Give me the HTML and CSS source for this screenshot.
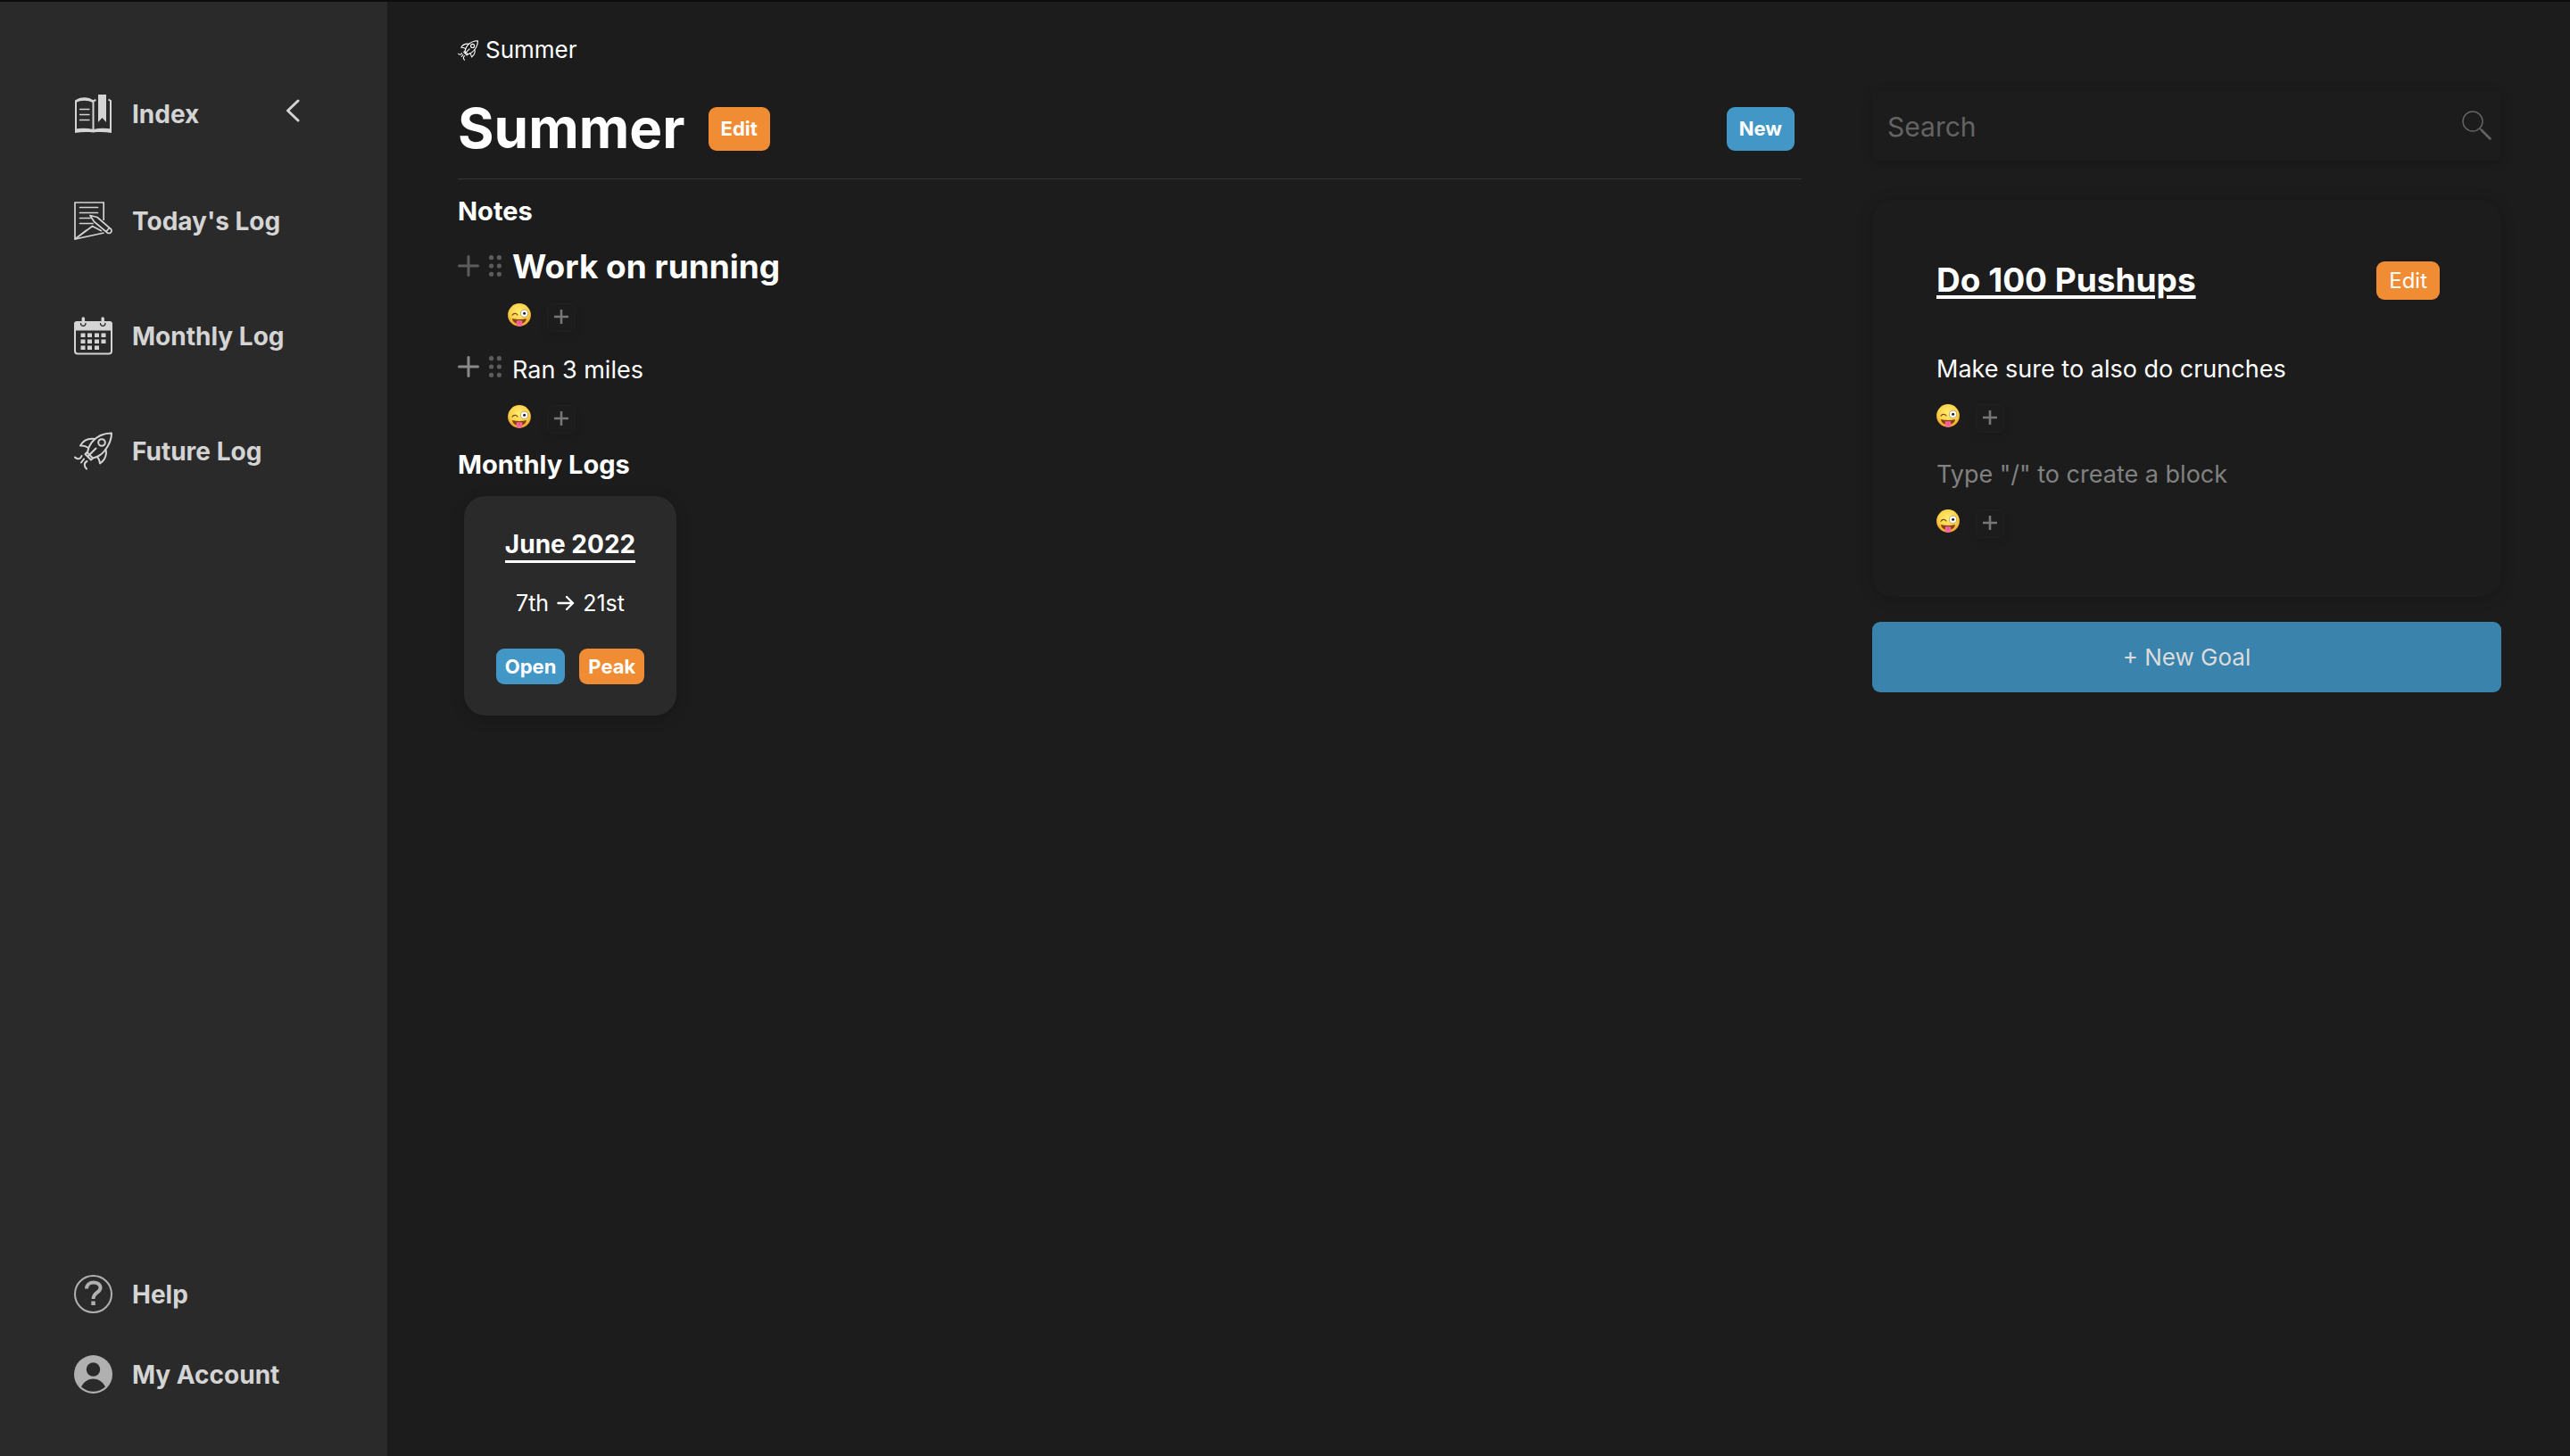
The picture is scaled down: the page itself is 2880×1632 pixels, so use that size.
FILE: index.html
```html
<!DOCTYPE html>
<html lang="en">
<head>
<meta charset="utf-8">
<meta name="viewport" content="width=device-width, initial-scale=1">
<title>Summer</title>
<link rel="stylesheet" href="styles.css">
</head>
<body>
<svg class="sprite" aria-hidden="true">
  <defs>
    <radialGradient id="face" cx="50%" cy="38%" r="62%">
      <stop offset="0" stop-color="#ffee74"/>
      <stop offset=".65" stop-color="#fbd24a"/>
      <stop offset="1" stop-color="#ec9a26"/>
    </radialGradient>
  </defs>
  <symbol id="rocket" viewBox="0 0 43 42">
    <g fill="none" stroke="currentColor" stroke-width="2" stroke-linejoin="round" stroke-linecap="round">
      <path d="M42 1C31 1 25 5 20 11C17 15 15.500 19 15 23L21 29C26 28 30 26 34 21C39 15 42 9 42 1Z"/>
      <circle cx="31" cy="11.500" r="3.800"/>
      <path d="M23.500 7.500C16 6.500 10 9.500 7 15C10 14.500 13 15.500 16.300 17.500"/>
      <path d="M35.500 19.500C37 26 34.500 31 29 35C28.500 31.500 27.500 29 25.500 27.300"/>
      <path d="M24.500 18L16.500 26M14.500 22.500L12.500 24.500L19 31L21 29"/>
      <path d="M1 28C3.500 31 7.500 30 8.500 26.500M11 30L8 34M14.500 32.500C11 34 11 38 14 41"/>
    </g>
  </symbol>
  <symbol id="plus" viewBox="0 0 24 24">
    <path d="M12 1.500V22.500M1.500 12H22.500" stroke="currentColor" stroke-width="3" stroke-linecap="round"/>
  </symbol>
  <symbol id="plus-small" viewBox="0 0 16 16">
    <path d="M8 0V16M0 8H16" stroke="currentColor" stroke-width="2.600"/>
  </symbol>
  <symbol id="grip" viewBox="0 0 14 24">
    <g fill="currentColor">
      <circle cx="2.600" cy="2.700" r="2.600"/><circle cx="11.400" cy="2.700" r="2.600"/>
      <circle cx="2.600" cy="12" r="2.600"/><circle cx="11.400" cy="12" r="2.600"/>
      <circle cx="2.600" cy="21.300" r="2.600"/><circle cx="11.400" cy="21.300" r="2.600"/>
    </g>
  </symbol>
  <symbol id="wink" viewBox="0 0 26 26">
    <circle cx="13" cy="13" r="12.900" fill="url(#face)"/>
    <path d="M5 13.200C6.500 10.800 9.500 10.800 11 13" fill="none" stroke="#7a4513" stroke-width="1.200" stroke-linecap="round"/>
    <circle cx="18.600" cy="11.300" r="4.100" fill="#fff" stroke="#a9875a" stroke-width=".7"/>
    <circle cx="18.600" cy="11.300" r="1.500" fill="#222"/>
    <path d="M5 17C10 18.300 16 18.300 21 17C20.500 21 17 23 13 23C9 23 5.500 21 5 17Z" fill="#87400f"/>
    <path d="M9.800 19.500C12 18.700 14 18.700 16.200 19.500V23C16.200 27 9.800 27 9.800 23Z" fill="#f5659f"/>
    <path d="M13 19.500V23" stroke="#d63d7c" stroke-width=".7"/>
  </symbol>
</svg>

<div class="app">
  <aside class="sidebar">
    <div class="sidebar-top">
      <a class="nav-link" href="#index">
        <svg class="nav-icon" viewBox="0 0 43 43" aria-hidden="true">
          <path d="M2 41V7M41 41V7L38.500 5.500M21.500 7.500V40M21.500 7.500C22.500 6.700 23 6.500 24.500 6" fill="none" stroke="currentColor" stroke-width="2"/>
          <path d="M1 38.500C8 37.500 15 37.500 21.500 39C28 37.500 35 37.500 42 38.500V43C35 41.800 28 41.800 21.500 42.500C15 41.800 8 41.800 1 43Z" fill="currentColor"/>
          <path d="M1 6.500C7 2 16 2 22 6.500L21 9C15 6 8 6 2 9Z" fill="currentColor"/>
          <path d="M6.500 16.500H17M6.500 22.500H17M6.500 28.500H17" stroke="currentColor" stroke-width="1.300" stroke-linecap="round"/>
          <path d="M27 0H36V31L31.500 26L27 31Z" fill="currentColor"/>
        </svg>
        Index
      </a>
      <button class="collapse" type="button" aria-label="Collapse sidebar">
        <svg width="16" height="26" viewBox="0 0 16 26" aria-hidden="true"><path d="M14 2L2.500 13L14 24" fill="none" stroke="currentColor" stroke-width="3" stroke-linecap="round" stroke-linejoin="round"/></svg>
      </button>
    </div>
    <nav class="nav-list">
      <a class="nav-link" href="#today">
        <svg class="nav-icon" viewBox="0 0 43 43" aria-hidden="true">
          <g fill="none" stroke="currentColor" stroke-width="1.700">
            <path d="M33.200 21V1H1V42L33.500 35"/>
            <path d="M1 42L20.500 27.500L31 33M1 42L14 32"/>
            <path d="M6.500 6.500H26.500M6.500 12.500H26.500M6.500 18.500H18M6.500 24.500H21" stroke-linecap="round"/>
            <path d="M18 15.500L26 17.500L41.500 31C43 34 40.500 36.500 37.500 35L22.500 22.500Z" fill="#2a2a2a" stroke-linejoin="round"/>
            <path d="M39.500 29.500L36 33.500"/>
          </g>
        </svg>
        Today's Log
      </a>
      <a class="nav-link" href="#monthly">
        <svg class="nav-icon" viewBox="0 0 43 43" aria-hidden="true">
          <rect x="1" y="6" width="41" height="35.500" rx="3" fill="none" stroke="currentColor" stroke-width="2"/>
          <path d="M0 15.500V8C0 6 1.500 5 3.500 5H39.500C41.500 5 43 6 43 8V15.500Z" fill="currentColor"/>
          <path d="M7.500 7C7.500 11.500 13 11.500 13 7M29.500 7C29.500 11.500 35 11.500 35 7" fill="none" stroke="#2a2a2a" stroke-width="1.300"/>
          <path d="M10.300 2V7M32.200 2V7" stroke="currentColor" stroke-width="3.500" stroke-linecap="round"/>
          <g fill="currentColor">
            <rect x="7.500" y="18.500" width="5" height="4.500"/><rect x="15" y="18.500" width="5" height="4.500"/><rect x="23" y="18.500" width="5" height="4.500"/><rect x="30.500" y="18.500" width="5" height="4.500"/>
            <rect x="7.500" y="25.500" width="5" height="4.500"/><rect x="15" y="25.500" width="5" height="4.500"/><rect x="23" y="25.500" width="5" height="4.500"/><rect x="30.500" y="25.500" width="5" height="4.500"/>
            <rect x="7.500" y="32.500" width="5" height="4.500"/><rect x="15" y="32.500" width="5" height="4.500"/><rect x="23" y="32.500" width="5" height="4.500"/>
          </g>
        </svg>
        Monthly Log
      </a>
      <a class="nav-link" href="#future">
        <svg class="nav-icon" aria-hidden="true"><use href="#rocket"/></svg>
        Future Log
      </a>
    </nav>
    <nav class="nav-footer">
      <a class="nav-link" href="#help">
        <svg class="nav-icon muted" viewBox="0 0 43 43" aria-hidden="true">
          <circle cx="21.500" cy="21.500" r="20.500" fill="none" stroke="currentColor" stroke-width="2"/>
          <path d="M14 15.500C14 6 29.500 6.500 29.500 14.500C29.500 20 21.500 19.500 21.500 27" fill="none" stroke="currentColor" stroke-width="4"/>
          <rect x="19.300" y="29.500" width="4.500" height="4.500" fill="currentColor"/>
        </svg>
        Help
      </a>
      <a class="nav-link" href="#account">
        <svg class="nav-icon muted" viewBox="0 0 43 43" aria-hidden="true">
          <circle cx="21.500" cy="21.500" r="21.500" fill="currentColor"/>
          <circle cx="21.500" cy="16" r="7.700" fill="#2a2a2a"/>
          <path d="M8 35.500C14 23.500 29 23.500 35 35.500C27 42.500 16 42.500 8 35.500Z" fill="#2a2a2a"/>
        </svg>
        My Account
      </a>
    </nav>
  </aside>

  <main class="page">
    <a class="crumb" href="#summer"><svg class="crumb-icon" aria-hidden="true"><use href="#rocket"/></svg>Summer</a>
    <header class="page-header">
      <h1>Summer</h1>
      <button class="btn orange tall" type="button">Edit</button>
      <button class="btn blue tall push" type="button">New</button>
    </header>

    <h2>Notes</h2>
    <section class="blocks">
      <article class="block">
        <div class="block-line">
          <div class="tools tools-heading">
            <button class="tool dim" type="button" aria-label="Add block"><svg width="24" height="24"><use href="#plus"/></svg></button>
            <button class="tool dim" type="button" aria-label="Move block"><svg width="14" height="24"><use href="#grip"/></svg></button>
          </div>
          <h3>Work on running</h3>
        </div>
        <div class="reactions indented">
          <button class="emoji" type="button" aria-label="Winking face"><svg width="26" height="26"><use href="#wink"/></svg></button>
          <button class="add" type="button" aria-label="Add reaction"><svg width="16" height="16"><use href="#plus-small"/></svg></button>
        </div>
      </article>
      <article class="block">
        <div class="block-line">
          <div class="tools">
            <button class="tool" type="button" aria-label="Add block"><svg width="24" height="24"><use href="#plus"/></svg></button>
            <button class="tool dim" type="button" aria-label="Move block"><svg width="14" height="24"><use href="#grip"/></svg></button>
          </div>
          <p>Ran 3 miles</p>
        </div>
        <div class="reactions indented">
          <button class="emoji" type="button" aria-label="Winking face"><svg width="26" height="26"><use href="#wink"/></svg></button>
          <button class="add" type="button" aria-label="Add reaction"><svg width="16" height="16"><use href="#plus-small"/></svg></button>
        </div>
      </article>
    </section>

    <h2>Monthly Logs</h2>
    <section class="cards">
      <article class="month-card">
        <a class="month-name" href="#june-2022">June 2022</a>
        <p class="range">7th <svg width="20" height="18" viewBox="0 0 20 18" role="img" aria-label="to"><path d="M1.500 9H18M11 2L18 9L11 16" fill="none" stroke="currentColor" stroke-width="2.400" stroke-linecap="round" stroke-linejoin="round"/></svg> 21st</p>
        <div class="card-actions">
          <button class="btn blue" type="button">Open</button>
          <button class="btn orange" type="button">Peak</button>
        </div>
      </article>
    </section>
  </main>

  <aside class="goals">
    <form class="search" role="search">
      <input type="search" placeholder="Search" aria-label="Search">
      <button class="search-btn" type="button" aria-label="Run search">
        <svg width="34" height="34" viewBox="0 0 34 34" aria-hidden="true"><circle cx="12" cy="12" r="11" fill="none" stroke="currentColor" stroke-width="1.500"/><path d="M20 20L23 23" stroke="currentColor" stroke-width="1.500"/><path d="M22 22L31.500 31.500" stroke="currentColor" stroke-width="2.600" stroke-linecap="round"/></svg>
      </button>
    </form>
    <section class="goal-card">
      <header class="goal-header">
        <a class="goal-title" href="#pushups">Do 100 Pushups</a>
        <button class="btn orange plain" type="button">Edit</button>
      </header>
      <div class="goal-block">
        <p>Make sure to also do crunches</p>
        <div class="reactions">
          <button class="emoji" type="button" aria-label="Winking face"><svg width="26" height="26"><use href="#wink"/></svg></button>
          <button class="add" type="button" aria-label="Add reaction"><svg width="16" height="16"><use href="#plus-small"/></svg></button>
        </div>
      </div>
      <div class="goal-block">
        <input class="block-input" type="text" placeholder='Type "/" to create a block' aria-label="New block">
        <div class="reactions">
          <button class="emoji" type="button" aria-label="Winking face"><svg width="26" height="26"><use href="#wink"/></svg></button>
          <button class="add" type="button" aria-label="Add reaction"><svg width="16" height="16"><use href="#plus-small"/></svg></button>
        </div>
      </div>
    </section>
    <button class="new-goal" type="button">+ New Goal</button>
  </aside>
</div>
</body>
</html>
```
FILE: styles.css
```css
* { box-sizing: border-box; }

body {
  margin: 0;
  background: #1c1c1c;
  color: #fff;
  font: 27px/40px Inter, "Liberation Sans", sans-serif;
}

h1, h2, h3, p { margin: 0; }
a { color: inherit; text-decoration: none; }
button, input { font: inherit; color: inherit; border: 0; padding: 0; margin: 0; background: none; }
button { cursor: pointer; }
svg { display: block; flex: none; }
.sprite { position: absolute; width: 0; height: 0; }

.app {
  display: grid;
  grid-template-columns: 434px minmax(0, 1fr) 705px;
  min-height: 100vh;
  padding-right: 77px;
  border-top: 2px solid #0c0c0c;
}

/* Sidebar */
.sidebar {
  display: flex;
  flex-direction: column;
  padding: 104px 83px 70px;
  background: #2a2a2a;
  color: #d4d4d4;
}
.sidebar-top { display: flex; justify-content: space-between; align-items: flex-start; margin-bottom: 77px; }
.nav-link { display: flex; align-items: center; gap: 22px; height: 43px; font-size: 28px; font-weight: 700; white-space: nowrap; }
.nav-icon { width: 43px; height: 43px; }
.muted { color: #b0b0b0; }
.collapse { padding: 5px 15px 0 0; }
.nav-list { display: flex; flex-direction: column; gap: 86px; }
.nav-footer { display: flex; flex-direction: column; gap: 47px; margin-top: auto; }

/* Page */
.page { padding: 35px 79px 40px; }
.crumb { display: flex; align-items: center; gap: 8px; height: 38px; font-size: 26px; }
.crumb-icon { width: 23px; height: 23px; }
.page-header {
  display: flex;
  align-items: center;
  gap: 26px;
  margin: 29px 0 16px;
  padding: 0 8px 16px 0;
  border-bottom: 1px solid #333;
}
h1 { font-size: 62px; line-height: 80px; font-weight: 700; }
h2 { font-size: 29px; line-height: 40px; font-weight: 700; }
h3 { font-size: 37px; line-height: 44px; font-weight: 700; }
.push { margin-left: auto; }

.btn {
  height: 40px;
  padding: 0 10px;
  border-radius: 9px;
  font-size: 22px;
  line-height: 40px;
  font-weight: 700;
}
.tall { height: 49px; padding: 0 14px; line-height: 49px; }
.plain { height: 43px; padding: 0 14px; font-size: 24px; line-height: 43px; font-weight: 400; }
.orange { background: #f08c33; }
.blue { background: #4397c7; }

.blocks { display: grid; gap: 23px; margin: 20px 0 15px; }
.block, .goal-block { display: grid; gap: 19px; }
.block-line { display: flex; align-items: flex-start; gap: 12px; }
.tools { display: flex; gap: 11px; padding-top: 4px; color: #8a8a8a; }
.tools-heading { padding-top: 9px; }
.dim { color: #5c5c5c; }
.reactions { display: flex; align-items: flex-start; gap: 18px; }
.indented { padding-left: 56px; }
.add {
  display: grid;
  place-items: center;
  width: 32px;
  height: 32px;
  padding-bottom: 2px;
  border: 1px solid #212121;
  border-radius: 7px;
  color: #777;
  box-shadow: 0 4px 10px rgba(0, 0, 0, .1);
}

.cards { display: flex; padding: 15px 7px; }
.month-card {
  display: flex;
  flex-direction: column;
  align-items: center;
  width: 238px;
  padding: 36px 0 35px;
  border-radius: 24px;
  background: #2a2a2a;
  box-shadow: 0 4px 16px rgba(0, 0, 0, .2);
}
.month-name { border-bottom: 3px solid #fff; font-size: 28px; line-height: 36px; font-weight: 700; }
.range { display: flex; align-items: center; gap: 9px; margin: 28px 0 34px; font-size: 25px; line-height: 34px; }
.card-actions { display: flex; gap: 16px; }

/* Goals */
.goals { display: flex; flex-direction: column; padding-top: 100px; }
.search {
  display: flex;
  align-items: center;
  height: 78px;
  margin-bottom: 44px;
  padding: 0 10px 0 17px;
  border-radius: 7px;
  box-shadow: 0 2px 12px rgba(0, 0, 0, .22);
}
.search input { flex: 1; min-width: 0; padding-top: 2px; font-size: 30px; outline: 0; appearance: none; }
.search input::placeholder { color: #636363; opacity: 1; }
.search-btn { color: #636363; }
.goal-card {
  display: grid;
  gap: 27px;
  padding: 66px 69px 66px 72px;
  border-radius: 24px;
  box-shadow: 0 2px 16px rgba(0, 0, 0, .22);
}
.goal-header { display: flex; align-items: center; justify-content: space-between; margin-bottom: 29px; }
.goal-title {
  font-size: 37px;
  line-height: 48px;
  font-weight: 700;
  text-decoration: underline;
  text-decoration-thickness: 4px;
  text-underline-offset: 4px;
}
.block-input { width: 100%; height: 40px; outline: 0; }
.block-input::placeholder { color: #818181; opacity: 1; }
.new-goal { height: 79px; margin-top: 28px; border-radius: 9px; background: #3983ad; color: #dcdcdc; font-size: 26px; }
```
